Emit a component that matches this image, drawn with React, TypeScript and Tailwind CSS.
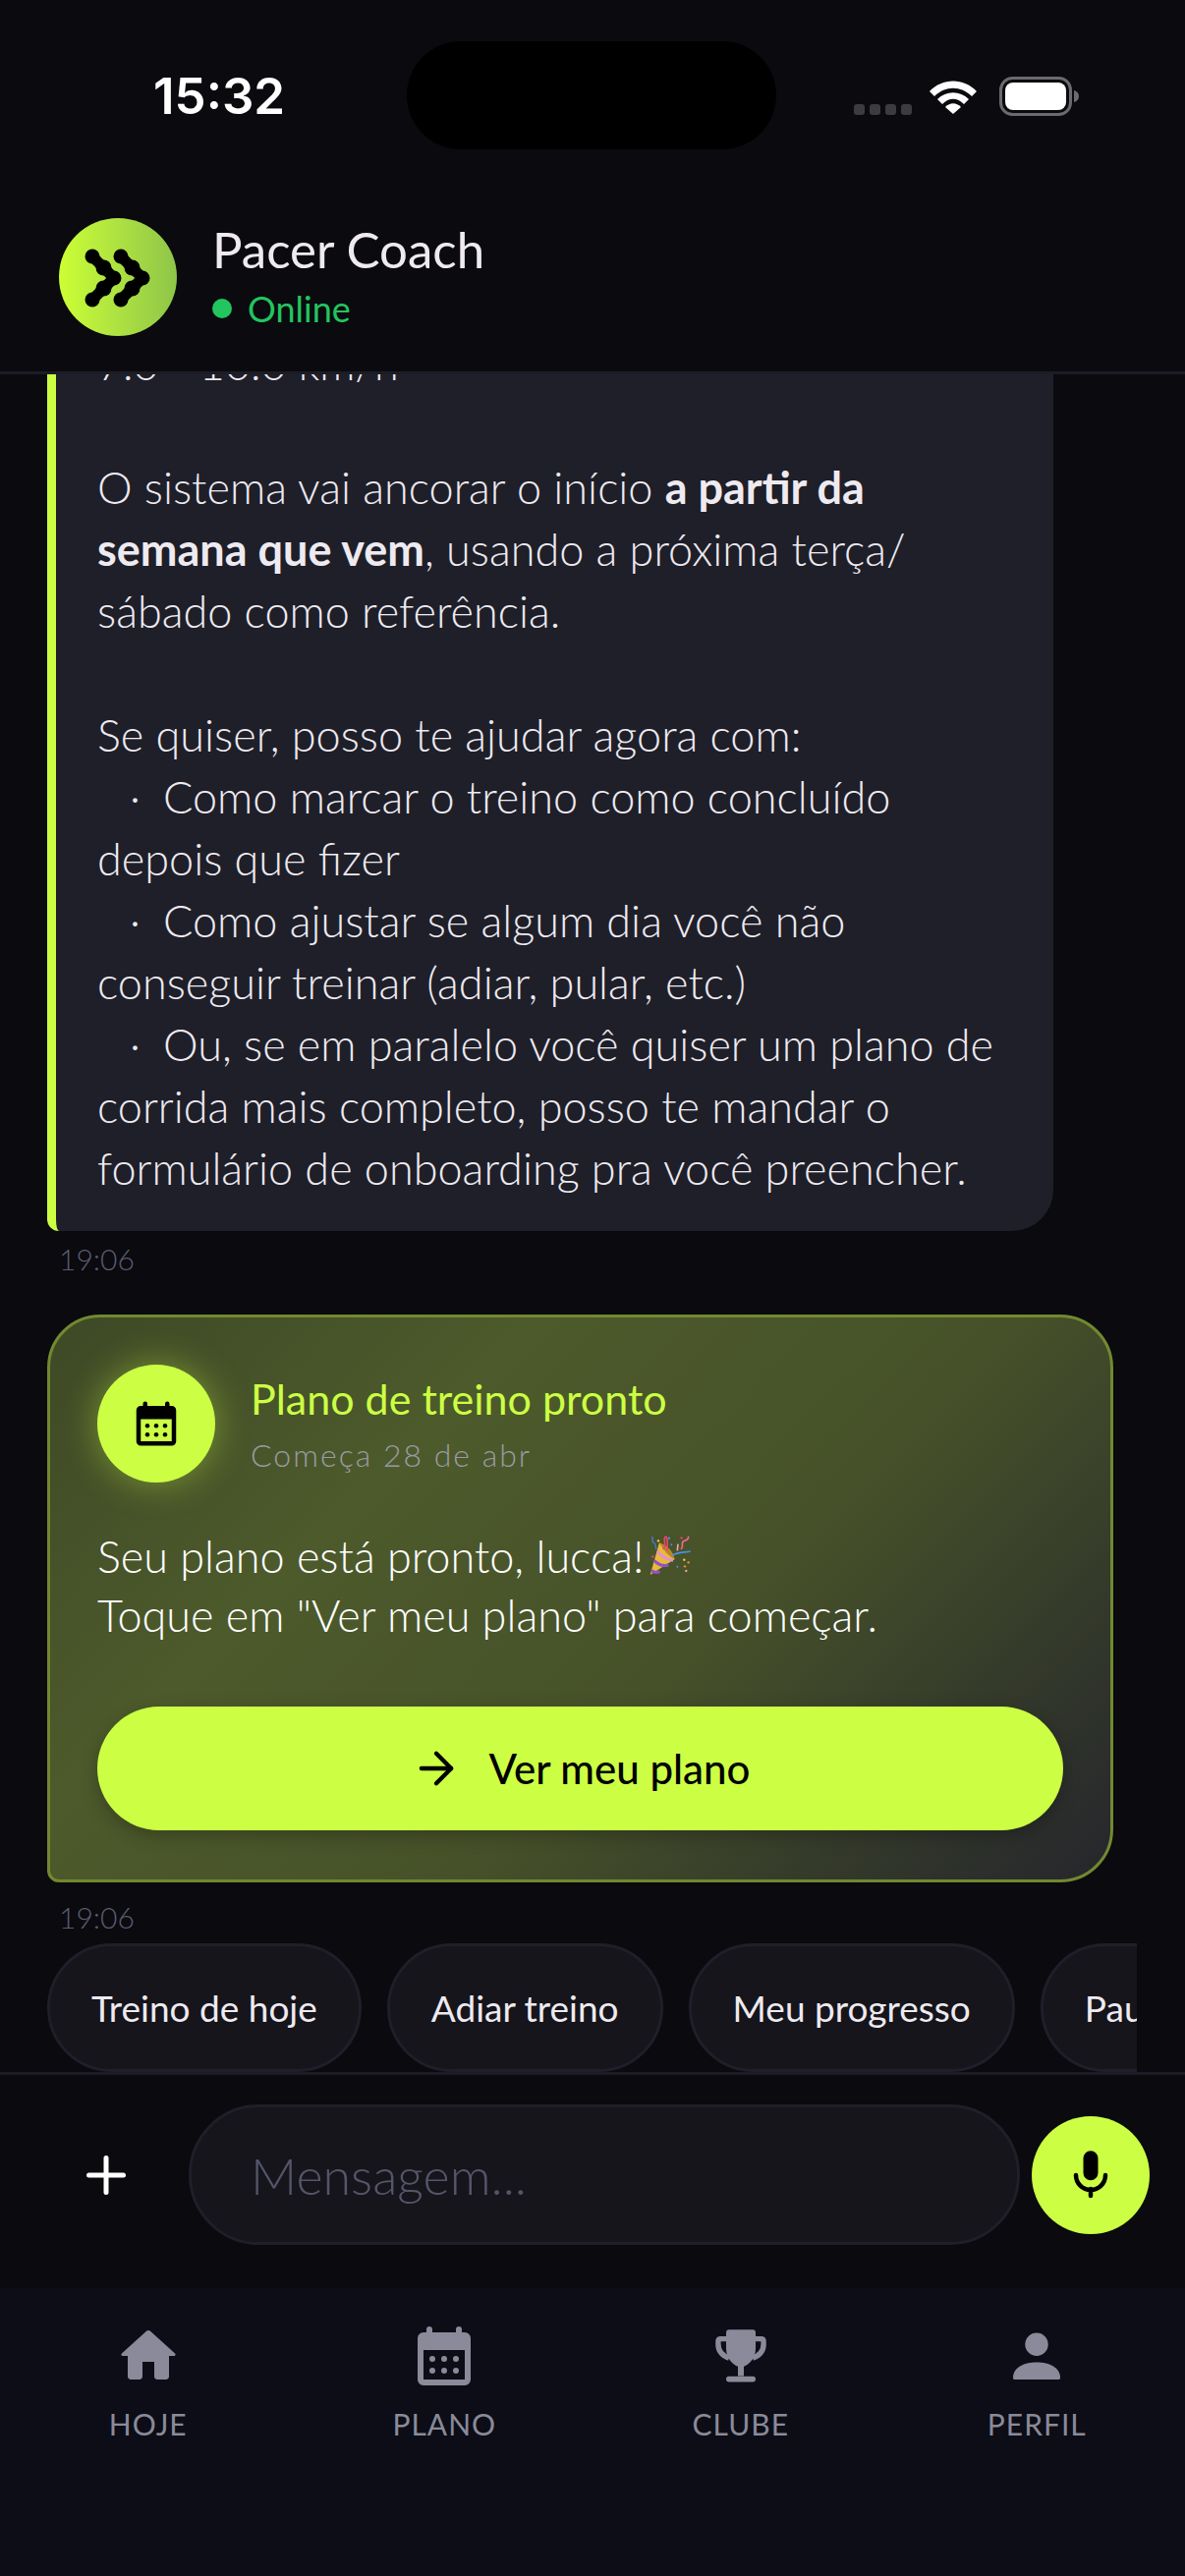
import React from 'react'
import { ArrowRight, Plus } from 'lucide-react'

const chips = ['Treino de hoje', 'Adiar treino', 'Meu progresso', 'Pausar plano']

function HomeIcon({ size }: { size: number }) {
  return (
    <svg viewBox="0 0 24 24" width={size} height={size} fill="currentColor">
      <path d="M10 19v-5h4v5c0 .55.45 1 1 1h3c.55 0 1-.45 1-1v-7h1.7c.46 0 .68-.57.33-.87L12.67 3.6c-.38-.34-.96-.34-1.34 0l-8.36 7.53c-.34.3-.13.87.33.87H5v7c0 .55.45 1 1 1h3c.55 0 1-.45 1-1z" />
    </svg>
  )
}

function CalendarIcon({ size }: { size: number }) {
  return (
    <svg viewBox="0 0 24 24" width={size} height={size} fill="currentColor">
      <path
        fillRule="evenodd"
        d="M5 4h1V3a1 1 0 0 1 2 0v1h8V3a1 1 0 0 1 2 0v1h1a2 2 0 0 1 2 2v14a2 2 0 0 1-2 2H5a2 2 0 0 1-2-2V6a2 2 0 0 1 2-2zM5 10v10h14V10z"
      />
      {[8, 12, 16].map(x => (
        <React.Fragment key={x}>
          <circle cx={x} cy="13" r="1" />
          <circle cx={x} cy="17" r="1" />
        </React.Fragment>
      ))}
    </svg>
  )
}

function TrophyIcon({ size }: { size: number }) {
  return (
    <svg viewBox="0 0 24 24" width={size} height={size} fill="currentColor">
      <path d="M8 3.1h8a1 1 0 0 1 1 1v5.4c0 3.5-2.5 5.5-4 6.1v3.2h-2v-3.2C9.5 15 7 13 7 9.5V4.1a1 1 0 0 1 1-1z" />
      <rect x="7" y="18.9" width="10" height="1.9" rx="0.95" />
      <path d="M7 6.2H5c-.8 0-.7.8-.7 1.8 0 2.5 1.7 4 3.7 4.7M17 6.2h2c.8 0 .7.8.7 1.8 0 2.500-1.700 4-3.700 4.700" fill="none" stroke="currentColor" strokeWidth="1.8" />
    </svg>
  )
}

function PersonIcon({ size }: { size: number }) {
  return (
    <svg viewBox="0 0 24 24" width={size} height={size} fill="currentColor">
      <circle cx="12" cy="8.100" r="3.900" />
      <path d="M4 19.400c0-3.300 3.500-5.200 8-5.200s8 1.900 8 5.200c0 .4-.2.6-.6.6H4.600c-.4 0-.6-.2-.6-.6z" />
    </svg>
  )
}

const tabs = [
  { label: 'HOJE', icon: HomeIcon },
  { label: 'PLANO', icon: CalendarIcon },
  { label: 'CLUBE', icon: TrophyIcon },
  { label: 'PERFIL', icon: PersonIcon },
]

function MicIcon() {
  return (
    <svg viewBox="0 0 60 60" className="h-[60px] w-[60px]">
      <rect x="22.500" y="5.300" width="15" height="30" rx="7.500" fill="#000" />
      <path d="M15 30A15 15 0 0 0 45 30M30 44V51" fill="none" stroke="#000" strokeWidth="4.500" strokeLinecap="round" />
    </svg>
  )
}

function Logo() {
  const chevron = 'M0 0 L11 11 L22 22 L11 33 L0 44'
  return (
    <svg viewBox="0 0 120 120" className="h-[120px] w-[120px]">
      {[34, 63].map(x => (
        <g key={x} transform={`translate(${x} 39)`} fill="#000">
          <path d={chevron} fill="none" stroke="#000" strokeWidth="11" strokeLinejoin="round" strokeLinecap="round" />
          <circle cx="0" cy="0" r="7.500" />
          <circle cx="11.500" cy="11.500" r="8" />
          <circle cx="22" cy="22" r="7.500" />
          <circle cx="11.500" cy="32.500" r="8" />
          <circle cx="0" cy="44" r="7.500" />
        </g>
      ))}
    </svg>
  )
}

function PartyPopper() {
  return (
    <svg viewBox="55 48 132 130" className="h-[44px] w-[44px]">
      <path d="M60 170 L88 72 Q125 85 135 122 Z" fill="#e9b93c" />
      <path d="M88 72 Q125 85 135 122 Q110 112 88 72 Z" fill="#b8862a" />
      <path d="M64 156 Q74 166 90 160" stroke="#8e52c9" strokeWidth="9" fill="none" />
      <path d="M72 126 Q92 146 116 140" stroke="#8e52c9" strokeWidth="9" fill="none" />
      <path d="M82 98 Q100 122 130 126" stroke="#e58be0" strokeWidth="8" fill="none" />
      <path d="M100 92 C112 78 98 62 106 54 C112 50 114 66 112 96" stroke="#e8476a" strokeWidth="5" fill="none" />
      <path d="M128 110 C145 100 165 102 183 98" stroke="#4a90e2" strokeWidth="5" fill="none" />
      <path d="M64 54 C74 56 60 68 72 72 C80 76 74 88 80 92" stroke="#3f7fd6" strokeWidth="4" fill="none" />
      <path d="M154 92 C166 80 150 72 164 66 C176 64 178 56 176 52" stroke="#ee6a8a" strokeWidth="5" fill="none" />
      <path d="M143 96 L145 76" stroke="#f2a0b8" strokeWidth="5" fill="none" />
      <circle cx="85" cy="66" r="3.500" fill="#f3d34a" />
      <circle cx="118" cy="58" r="3.500" fill="#4a90e2" />
      <circle cx="125" cy="78" r="3" fill="#4a90e2" />
      <circle cx="156" cy="57" r="3.500" fill="#e8476a" />
      <circle cx="68" cy="114" r="3.500" fill="#e8476a" />
      <circle cx="164" cy="124" r="3.500" fill="#f3d34a" />
      <circle cx="177" cy="132" r="3.500" fill="#e8923a" />
      <circle cx="143" cy="145" r="3" fill="#4a90e2" />
      <circle cx="166" cy="144" r="3.500" fill="#e8923a" />
      <circle cx="170" cy="158" r="3.500" fill="#f2a0b8" />
    </svg>
  )
}

function StatusBar() {
  return (
    <div className="relative flex h-[198px] shrink-0 items-start justify-between pl-[156px] pr-[107px] pt-[68px]">
      <span className="font-['Inter'] text-[51px] font-semibold leading-[60px] text-white">15:32</span>
      <div className="absolute left-[414px] top-[42px] h-[110px] w-[376px] rounded-full bg-black" />
      <div className="flex items-center gap-[14px] pt-[10px]">
        <div className="mr-[3px] mt-[26px] flex gap-[5px]">
          {[0, 1, 2, 3].map(i => (
            <div key={i} className="h-[11px] w-[11px] rounded-[3px] bg-[#3c3c40]" />
          ))}
        </div>
        <svg viewBox="0 0 50 36" className="h-[36px] w-[50px]">
          <path d="M1 13 C14 -1 36 -1 49 13 L44 18 C33 7 17 7 6 18 Z" fill="#fff" />
          <path d="M9 21 C18 12 32 12 41 21 L36 26 C29 19 21 19 14 26 Z" fill="#fff" />
          <path d="M17 29 C22 24 28 24 33 29 L25 36 Z" fill="#fff" />
        </svg>
        <svg viewBox="0 0 82 40" className="ml-[8px] h-[40px] w-[82px]">
          <rect x="1.500" y="1.500" width="71" height="37" rx="12" fill="none" stroke="#6b6b6e" strokeWidth="3" />
          <rect x="6" y="6" width="62" height="28" rx="8" fill="#fff" />
          <path d="M76 14 C80 15 81 18 81 20 C81 22 80 25 76 26 Z" fill="#6b6b6e" />
        </svg>
      </div>
    </div>
  )
}

function Bullet({ children }: { children: React.ReactNode }) {
  return (
    <p>
      <span className="inline-block w-[67px] pl-[33px]">·</span>
      {children}
    </p>
  )
}

export default function App() {
  return (
    <div className="flex h-[2622px] w-[1206px] flex-col overflow-hidden bg-[#0a0a0f] font-['Lato',sans-serif] text-white">
      <header className="shrink-0 border-b-[3px] border-[#1c1c26]">
        <StatusBar />
        <div className="flex h-[180px] items-start gap-[36px] px-[60px] pt-[24px]">
          <div className="h-[120px] w-[120px] rounded-full bg-gradient-to-r from-[#ccff33] to-[#8fc548]">
            <Logo />
          </div>
          <div className="pt-[2px]">
            <div className="text-[51px] leading-[60px] text-[#eeeaf0]">Pacer Coach</div>
            <div className="flex items-center gap-[16px] pt-[6px] text-[36px] leading-[48px] text-[#22c55e]">
              <span className="h-[20px] w-[20px] rounded-full bg-[#22c55e]" />
              Online
            </div>
          </div>
        </div>
      </header>

      <main className="flex min-h-0 flex-1 flex-col justify-end overflow-hidden px-[48px]">
        <div className="w-[1024px] shrink-0 rounded-br-[42px] rounded-bl-[12px] border-l-[9px] border-[#ccff44] bg-[#1e1f29] pb-[32px] pl-[42px] pr-[60px] pt-[24px] text-[45px] font-light leading-[63px] text-[#eeeaf0]">
          <p>7.0 - 10.0 km/h</p>
          <br />
          <p>
            O sistema vai ancorar o início <b className="font-bold">a partir da semana que vem</b>, usando a próxima terça/<wbr />sábado como referência.
          </p>
          <br />
          <p>Se quiser, posso te ajudar agora com:</p>
          <Bullet>Como marcar o treino como concluído depois que fizer</Bullet>
          <Bullet>Como ajustar se algum dia você não conseguir treinar (adiar, pular, etc.)</Bullet>
          <Bullet>Ou, se em paralelo você quiser um plano de corrida mais completo, posso te mandar o formulário de onboarding pra você preencher.</Bullet>
        </div>
        <div className="shrink-0 pl-[12px] pt-[10px] text-[30px] font-light leading-[36px] text-[#5c5c70]">19:06</div>

        <div className="mt-[39px] h-[578px] w-[1085px] shrink-0 rounded-[54px] rounded-bl-[12px] border-[3px] border-[#72892f] bg-[linear-gradient(135deg,#3e4926_0%,#4d5a2b_30%,#465129_60%,#25262c_100%)] pl-[48px] pr-[48px] pt-[48px]">
          <div className="flex items-start gap-[36px]">
            <div className="flex h-[120px] w-[120px] items-center justify-center rounded-full bg-[#ccff44] text-black shadow-[0_0_36px_rgba(204,255,68,0.4)]">
              <CalendarIcon size={54} />
            </div>
            <div className="pt-[10px]">
              <div className="text-[43px] leading-[50px] text-[#ccff44]">Plano de treino pronto</div>
              <div className="pt-[14px] text-[32px] font-light leading-[36px] tracking-[2px] text-[#9a9aa4]">Começa 28 de abr</div>
            </div>
          </div>
          <div className="pt-[45px] text-[45px] font-light leading-[60px] text-white">
            <div className="flex items-center gap-[5px]">
              Seu plano está pronto, lucca!
              <PartyPopper />
            </div>
            <div>Toque em "Ver meu plano" para começar.</div>
          </div>
          <button className="mt-[63px] flex h-[126px] w-[983px] items-center justify-center gap-[28px] rounded-full bg-[#ccff44] text-[42px] font-medium text-black shadow-[0_6px_18px_rgba(0,0,0,0.25)]">
            <ArrowRight size={52} strokeWidth={2} />
            Ver meu plano
          </button>
        </div>
        <div className="shrink-0 pl-[12px] pt-[17px] text-[30px] font-light leading-[36px] text-[#5c5c70]">19:06</div>

        <div className="mt-[9px] flex w-[1109px] shrink-0 gap-[26px] overflow-hidden">
          {chips.map(chip => (
            <div key={chip} className="flex h-[131px] shrink-0 items-center rounded-full border-[3px] border-[#1f1f2a] bg-[#15151b] px-[42px] text-[37px] text-[#eeeaf0]">
              {chip}
            </div>
          ))}
        </div>
      </main>

      <div className="flex h-[220px] shrink-0 items-start border-t-[3px] border-[#1c1c26] pl-[78px] pt-[30px]">
        <div className="flex h-[143px] w-[60px] items-center justify-center text-white">
          <Plus size={62} strokeWidth={2} />
        </div>
        <div className="ml-[54px] flex h-[143px] w-[846px] items-center rounded-full border-[3px] border-[#1f1f2a] bg-[#15151b] pl-[60px] text-[52px] font-light text-[#55556a]">
          Mensagem...
        </div>
        <div className="ml-[12px] mt-[12px] flex h-[120px] w-[120px] items-center justify-center rounded-full bg-[#ccff44]">
          <MicIcon />
        </div>
      </div>

      <nav className="grid h-[293px] shrink-0 grid-cols-4 bg-[#0c0d16] pt-[33px]">
        {tabs.map(({ label, icon: Icon }) => (
          <div key={label} className="flex flex-col items-center text-[#8a8a9a]">
            <Icon size={72} />
            <span className="pt-[15px] text-[30px] leading-[36px] tracking-[1px]">{label}</span>
          </div>
        ))}
      </nav>
    </div>
  )
}
